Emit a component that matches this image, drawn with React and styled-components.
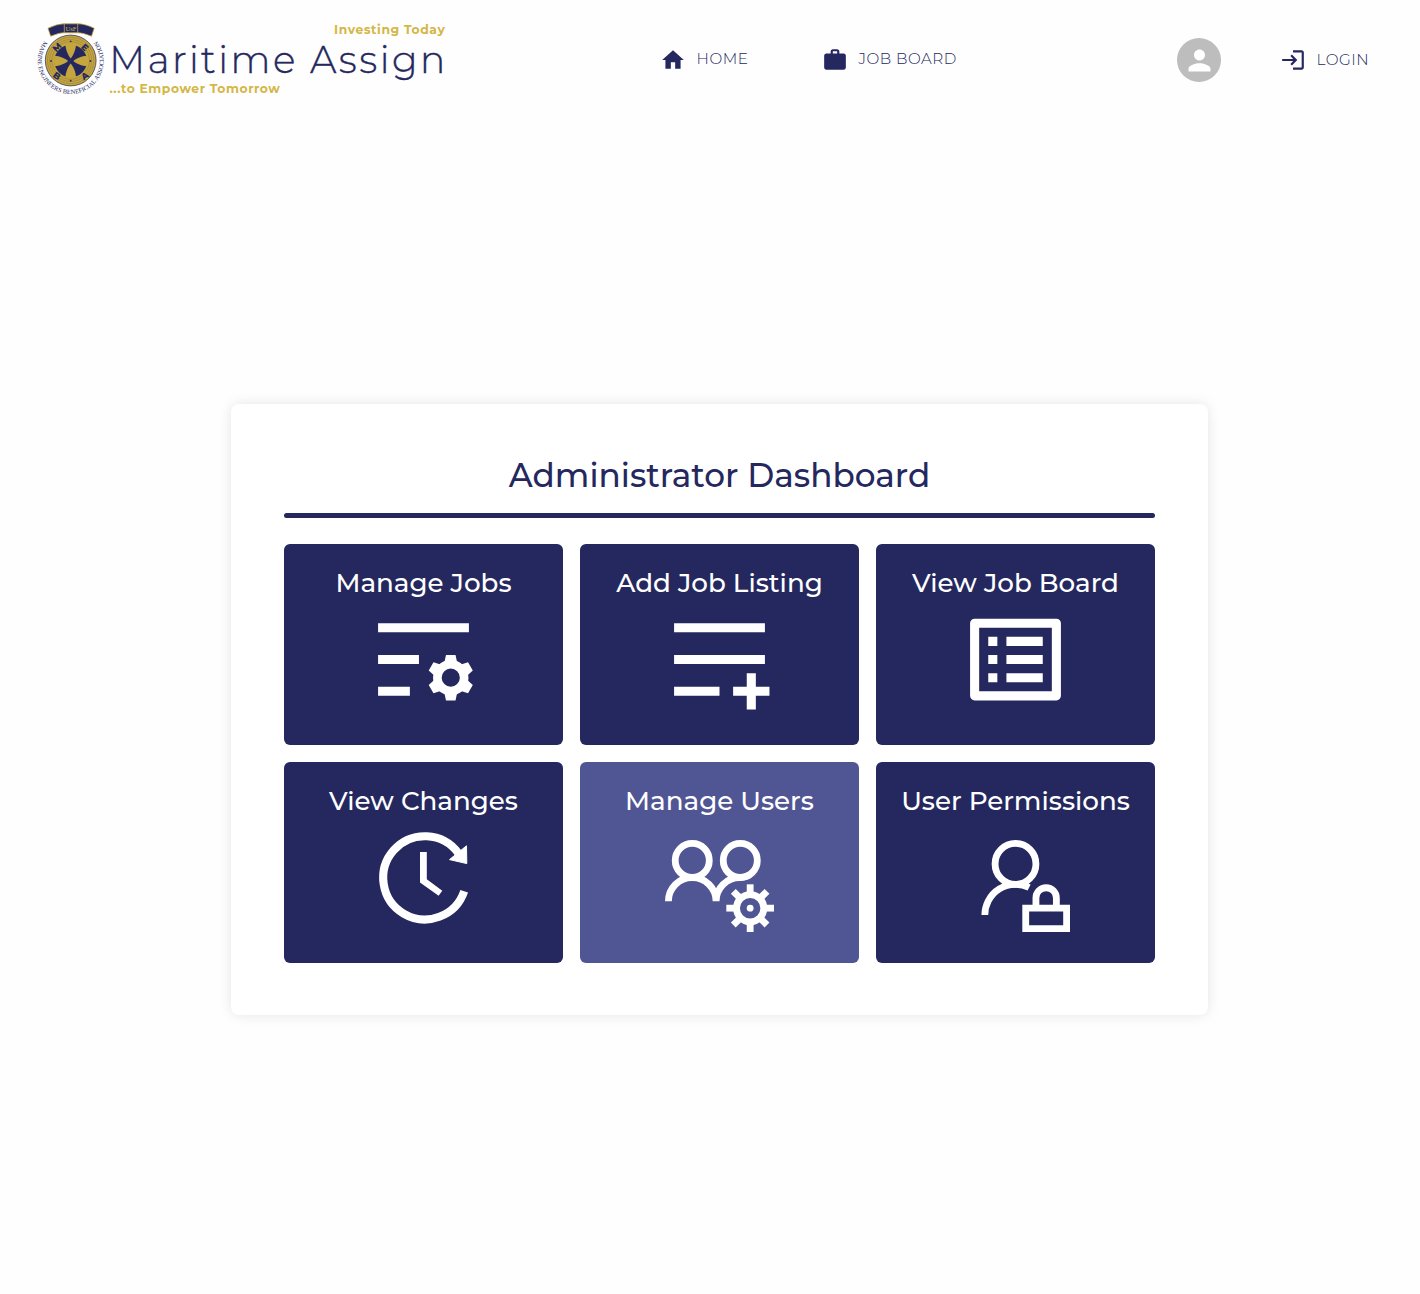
import React from "react";
import styled, { createGlobalStyle } from "styled-components";

const NAVY = "#24285e";
const GOLD = "#d3b747";
const SEAL_GOLD = "#c5a53d";
const FONT = `Montserrat, Inter, "Open Sans", "Liberation Sans", sans-serif`;

const GlobalStyle = createGlobalStyle`
  * { box-sizing: border-box; }
  body { margin: 0; background: #fefefe; color: ${NAVY}; font-family: ${FONT}; }
`;

const Page = styled.div`
  width: 1420px;
  height: 1294px;
  overflow: hidden;
  background: #fefefe;
`;

const Header = styled.header`
  display: flex;
  align-items: center;
  height: 120px;
  padding-left: 30px;
`;

const Logo = styled.svg`
  display: block;
  width: 430px;
  height: 100px;
  flex: none;
`;

const Nav = styled.nav`
  display: flex;
  align-items: center;
  gap: 72px;
  margin-left: 200px;
`;

const NavItem = styled.a`
  display: flex;
  align-items: center;
  width: ${(p) => p.$width}px;
  gap: 10.6px;
  font-size: 15.2px;
  letter-spacing: 0.5px;
  line-height: 20px;
  font-weight: 300;
  color: ${NAVY};
  white-space: nowrap;
  text-decoration: none;
`;

const NavIcon = styled.svg`
  width: 26px;
  height: 26px;
  flex: none;
  fill: ${NAVY};
`;

const NavText = styled.span`
  padding-bottom: ${(p) => p.$lift || 0}px;
`;

const Account = styled.div`
  display: flex;
  align-items: center;
  gap: 59px;
  margin-left: 219px;
`;

const Avatar = styled.div`
  display: flex;
  align-items: center;
  justify-content: center;
  width: 44px;
  height: 44px;
  border-radius: 50%;
  background: #bdbdbd;
  svg { width: 33px; height: 33px; fill: #fff; }
`;

const Card = styled.main`
  width: 977px;
  height: 611px;
  margin: 284px 0 0 231px;
  padding: 50px 53px 52px;
  border-radius: 8px;
  background: #fff;
  box-shadow: 0 0 13px rgba(0, 0, 0, 0.1);
`;

const Title = styled.h1`
  margin: 0;
  height: 59px;
  font-size: 32.7px;
  line-height: 43px;
  font-weight: 500;
  text-align: center;
  white-space: nowrap;
`;

const Rule = styled.hr`
  height: 5px;
  margin: 0 0 26px;
  border: 0;
  border-radius: 3px;
  background: ${NAVY};
`;

const Grid = styled.div`
  display: grid;
  grid-template-columns: repeat(3, 279px);
  grid-auto-rows: 201px;
  gap: 17px;
`;

const Tile = styled.button`
  display: flex;
  flex-direction: column;
  align-items: center;
  padding: 22px 0 0;
  border: 0;
  border-radius: 6px;
  background: ${(p) => (p.$active ? "#505594" : NAVY)};
  color: #fff;
  font-family: ${FONT};
  font-size: 26.16px;
  font-weight: 500;
  line-height: 34px;
  white-space: nowrap;
`;

const TileIcon = styled.svg`
  width: 109px;
  height: 109px;
  margin-top: 5px;
  flex: none;
`;

const ManageJobsIcon = () => (
  <TileIcon viewBox="0 0 24 24" fill="#fff">
    <path d="M2 4h20v2H2zM2 11h9v2H2zM2 18h7v2H2z" />
    <path fillRule="evenodd" d="M18 12.1a3.9 3.9 0 1 0 0 7.8a3.9 3.9 0 1 0 0-7.8zM18 14a2 2 0 1 1 0 4a2 2 0 1 1 0-4z" />
    {[0, 60, 120, 180, 240, 300].map((a) => (
      <path key={a} d="M16.95 11h2.1l.35 1.6.3 1.1-1.2-.2h-1l-1.2.2.3-1.1z" transform={`rotate(${a} 18 16)`} />
    ))}
  </TileIcon>
);

const AddJobIcon = () => (
  <TileIcon viewBox="0 0 24 24" fill="#fff">
    <path d="M2 4h20v2H2zM2 11h20v2H2zM2 18h10v2H2zM18 15h2v3h3v2h-3v3h-2v-3h-3v-2h3z" />
  </TileIcon>
);

const JobBoardIcon = () => (
  <TileIcon viewBox="0 0 24 24" fill="#fff">
    <path fillRule="evenodd" d="M3 3h18a1 1 0 0 1 1 1v16a1 1 0 0 1-1 1H3a1 1 0 0 1-1-1V4a1 1 0 0 1 1-1zM4 5v14h16V5z" />
    <path d="M6 7h2v2H6zM6 11h2v2H6zM6 15h2v2H6zM10 7h8v2h-8zM10 11h8v2h-8zM10 15h8v2h-8z" />
  </TileIcon>
);

const ChangesIcon = () => (
  <TileIcon viewBox="0 0 109 109" fill="#fff">
    <path d="M95.2 68.2A41.6 41.6 0 1 1 89.3 30.1" fill="none" stroke="#fff" strokeWidth="8.1" />
    <path d="M97.5 22.8L80.5 36.6L97.8 40.6z" stroke="#fff" strokeWidth="1" strokeLinejoin="round" />
    <path d="M51 29h6.8v27.3l15.5 11.5-3.7 5L51 59.5z" />
  </TileIcon>
);

const ManageUsersIcon = () => (
  <TileIcon viewBox="0 0 32 32" fill="none" stroke="#fff" strokeWidth="2">
    <circle cx="8" cy="11" r="5" />
    <circle cx="22.1" cy="11" r="5" />
    <path d="M1 23a7 7 0 0 1 14 0a7 7 0 0 1 7-7c1 0 1.8-.2 2.6-.7" />
    <circle cx="25" cy="25" r="4" />
    <circle cx="25" cy="25" r="1" fill="#fff" stroke="none" />
    {[0, 45, 90, 135, 180, 225, 270, 315].map((a) => (
      <path key={a} d="M25 21v-3" transform={`rotate(${a} 25 25)`} />
    ))}
  </TileIcon>
);

const PermissionsIcon = () => (
  <TileIcon viewBox="0 0 32 32" fill="none" stroke="#fff" strokeWidth="2">
    <circle cx="16" cy="12" r="6" />
    <path d="M7 27a9 9 0 0 1 13-8.05" />
    <path d="M19 25h12v6H19zM22 25v-3a3 3 0 0 1 6 0v3" />
  </TileIcon>
);

const tiles = [
  { label: "Manage Jobs", Icon: ManageJobsIcon },
  { label: "Add Job Listing", Icon: AddJobIcon },
  { label: "View Job Board", Icon: JobBoardIcon },
  { label: "View Changes", Icon: ChangesIcon },
  { label: "Manage Users", Icon: ManageUsersIcon, active: true },
  { label: "User Permissions", Icon: PermissionsIcon },
];

const sealLetters = [
  { letter: "M", x: 57, y: 47.3, turn: -45 },
  { letter: "E", x: 84.8, y: 47.3, turn: 45 },
  { letter: "B", x: 57, y: 75.8, turn: 35 },
  { letter: "A", x: 84.8, y: 75.8, turn: -35 },
];

const Brand = () => (
  <Logo viewBox="30 10 430 100">
    <defs>
      <path id="motto" d="M44.4 41A33 33 0 1 0 97 41" />
    </defs>
    <circle cx="70.7" cy="60.5" r="25.4" fill={SEAL_GOLD} stroke={NAVY} strokeWidth="0.7" />
    {[23.2, 21, 18.8].map((r) => (
      <circle key={r} cx="70.7" cy="60.5" r={r} fill="none" stroke="#8b793f" strokeWidth="0.5" />
    ))}
    <circle cx="70.7" cy="61" r="16.3" fill={NAVY} />
    {[0, 90, 180, 270].map((a) => (
      <path key={a} d="M70.7 58.4C68 55.5 65.7 49.5 65.4 45A16.5 16.5 0 0 1 76 45C75.7 49.5 73.4 55.5 70.7 58.4z" fill={SEAL_GOLD} transform={`rotate(${a} 70.7 61)`} />
    ))}
    {[0, 90, 180, 270].map((a) => (
      <circle key={a} cx="70.7" cy="41.3" r="0.9" fill={NAVY} transform={`rotate(${a} 70.7 61)`} />
    ))}
    <g fontFamily={FONT} fontSize="9" fontWeight="800" fill={NAVY} textAnchor="middle">
      {sealLetters.map(({ letter, x, y, turn }) => (
        <text key={letter} x={x} y={y + 3.2} transform={`rotate(${turn} ${x} ${y})`}>{letter}</text>
      ))}
    </g>
    <path d="M48 28.3Q57 23.8 64 23.8H78Q85 23.8 94.2 28.3L91.5 36.2Q82 32.6 78 32.8H64Q60 32.6 50.7 36.2z" fill={NAVY} stroke={SEAL_GOLD} strokeWidth="0.8" />
    <path d="M64.3 24V32.7M77.7 24V32.7" stroke={SEAL_GOLD} strokeWidth="0.8" />
    <text x="71" y="30.6" textAnchor="middle" fontFamily="Liberation Serif, serif" fontSize="6.6" fill={GOLD}>UsF</text>
    <text fontFamily="Liberation Serif, serif" fontSize="6.2" fill={NAVY} textLength="146" lengthAdjust="spacingAndGlyphs">
      <textPath href="#motto">MARINE ENGINEERS BENEFICIAL ASSOCIATION</textPath>
    </text>
    <g fontFamily={FONT} fill={NAVY}>
      <text x="109.3" y="73" fontSize="37.5" fontWeight="300" stroke={NAVY} strokeWidth="0.35" textLength="336" lengthAdjust="spacing">Maritime Assign</text>
      <g fontSize="12.3" fontWeight="700" fill={GOLD}>
        <text x="334" y="34" textLength="110.8" lengthAdjust="spacing">Investing Today</text>
        <text x="109.5" y="92.5" textLength="170.3" lengthAdjust="spacing">...to Empower Tomorrow</text>
      </g>
    </g>
  </Logo>
);

export default function App() {
  return (
    <Page>
      <GlobalStyle />
      <Header>
        <Brand />
        <Nav>
          <NavItem $width={90}>
            <NavIcon viewBox="0 0 24 24"><path d="M10 20v-6h4v6h5v-8h3L12 3 2 12h3v8z" /></NavIcon>
            <NavText $lift={2}>HOME</NavText>
          </NavItem>
          <NavItem $width={136}>
            <NavIcon viewBox="0 0 24 24"><path d="M20 6h-4V4c0-1.11-.89-2-2-2h-4c-1.11 0-2 .89-2 2v2H4c-1.11 0-1.99.89-1.99 2L2 19c0 1.11.89 2 2 2h16c1.11 0 2-.89 2-2V8c0-1.11-.89-2-2-2zm-6 0h-4V4h4v2z" /></NavIcon>
            <NavText $lift={2}>JOB BOARD</NavText>
          </NavItem>
        </Nav>
        <Account>
          <Avatar>
            <svg viewBox="0 0 24 24"><path d="M12 12c2.21 0 4-1.79 4-4s-1.79-4-4-4-4 1.79-4 4 1.79 4 4 4zm0 2c-2.67 0-8 1.34-8 4v2h16v-2c0-2.66-5.33-4-8-4z" /></svg>
          </Avatar>
          <NavItem $width={90}>
            <NavIcon viewBox="0 0 24 24"><path d="M11 7 9.6 8.4l2.6 2.6H2v2h10.2l-2.6 2.6L11 17l5-5-5-5zm9 12h-8v2h8c1.1 0 2-.9 2-2V5c0-1.1-.9-2-2-2h-8v2h8v14z" /></NavIcon>
            <NavText>LOGIN</NavText>
          </NavItem>
        </Account>
      </Header>
      <Card>
        <Title>Administrator Dashboard</Title>
        <Rule />
        <Grid>
          {tiles.map(({ label, Icon, active }) => (
            <Tile key={label} $active={active}>
              <span>{label}</span>
              <Icon />
            </Tile>
          ))}
        </Grid>
      </Card>
    </Page>
  );
}
